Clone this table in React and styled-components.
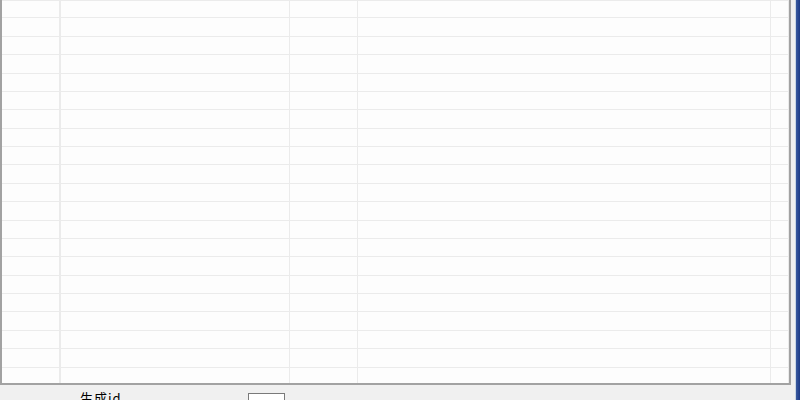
import React from "react";
import styled, { createGlobalStyle } from "styled-components";

const GlobalStyle = createGlobalStyle`
  html, body {
    margin: 0;
    padding: 0;
    background: #f0f0f0;
    font-family: "Noto Sans CJK SC", "Noto Sans", sans-serif;
  }
`;

const COLUMNS = [59, 229, 68, 413, 18];
const ROW_COUNT = 22;

const Window = styled.div`
  width: 800px;
  height: 400px;
  overflow: hidden;
  display: flex;
  flex-direction: row;
  background: #f0f0f0;
`;

const Form = styled.div`
  flex: 1;
  display: flex;
  flex-direction: column;
  padding-right: 4px;
  border-right: 1px solid #c9d6e3;
`;

const WindowEdge = styled.div`
  width: 4px;
  background: linear-gradient(to right, #3a5aa0, #1c3a86);
`;

const Grid = styled.div`
  height: 385px;
  flex-shrink: 0;
  overflow: hidden;
  background: #fdfdfd;
  border-left: 2px solid #a2a2a2;
  border-right: 2px solid #a2a2a2;
  border-bottom: 2px solid #a2a2a2;
  box-sizing: border-box;
`;

const Row = styled.div`
  display: grid;
  grid-template-columns: ${COLUMNS.map((c) => `${c}px`).join(" ")};
  height: 18.38px;
  box-sizing: border-box;
  border-bottom: 1px solid #ebebeb;
  &:first-child {
    border-top: 1px solid #ebebeb;
  }
`;

const Cell = styled.div`
  border-right: ${(p) => (p.$head ? "2px" : "1px")} solid #ebebeb;
  background: #fdfdfd;
`;

const Footer = styled.div`
  display: flex;
  flex-direction: row;
  align-items: flex-start;
  padding-left: 80px;
  padding-top: 5px;
`;

const Label = styled.span`
  width: 168px;
  font-size: 13px;
  line-height: 15px;
  letter-spacing: 1px;
  color: #000;
`;

const TextBox = styled.div`
  width: 35px;
  height: 20px;
  margin-top: 3px;
  background: #fff;
  border: 1px solid #7a7a7a;
`;

export default function App() {
  const rows = Array.from({ length: ROW_COUNT });
  return (
    <Window>
      <GlobalStyle />
      <Form>
        <Grid>
          {rows.map((_, r) => (
            <Row key={r}>
              {COLUMNS.map((_, c) => (
                <Cell key={c} $head={c === 0} />
              ))}
            </Row>
          ))}
        </Grid>
        <Footer>
          <Label>生成id</Label>
          <TextBox />
        </Footer>
      </Form>
      <WindowEdge />
    </Window>
  );
}
